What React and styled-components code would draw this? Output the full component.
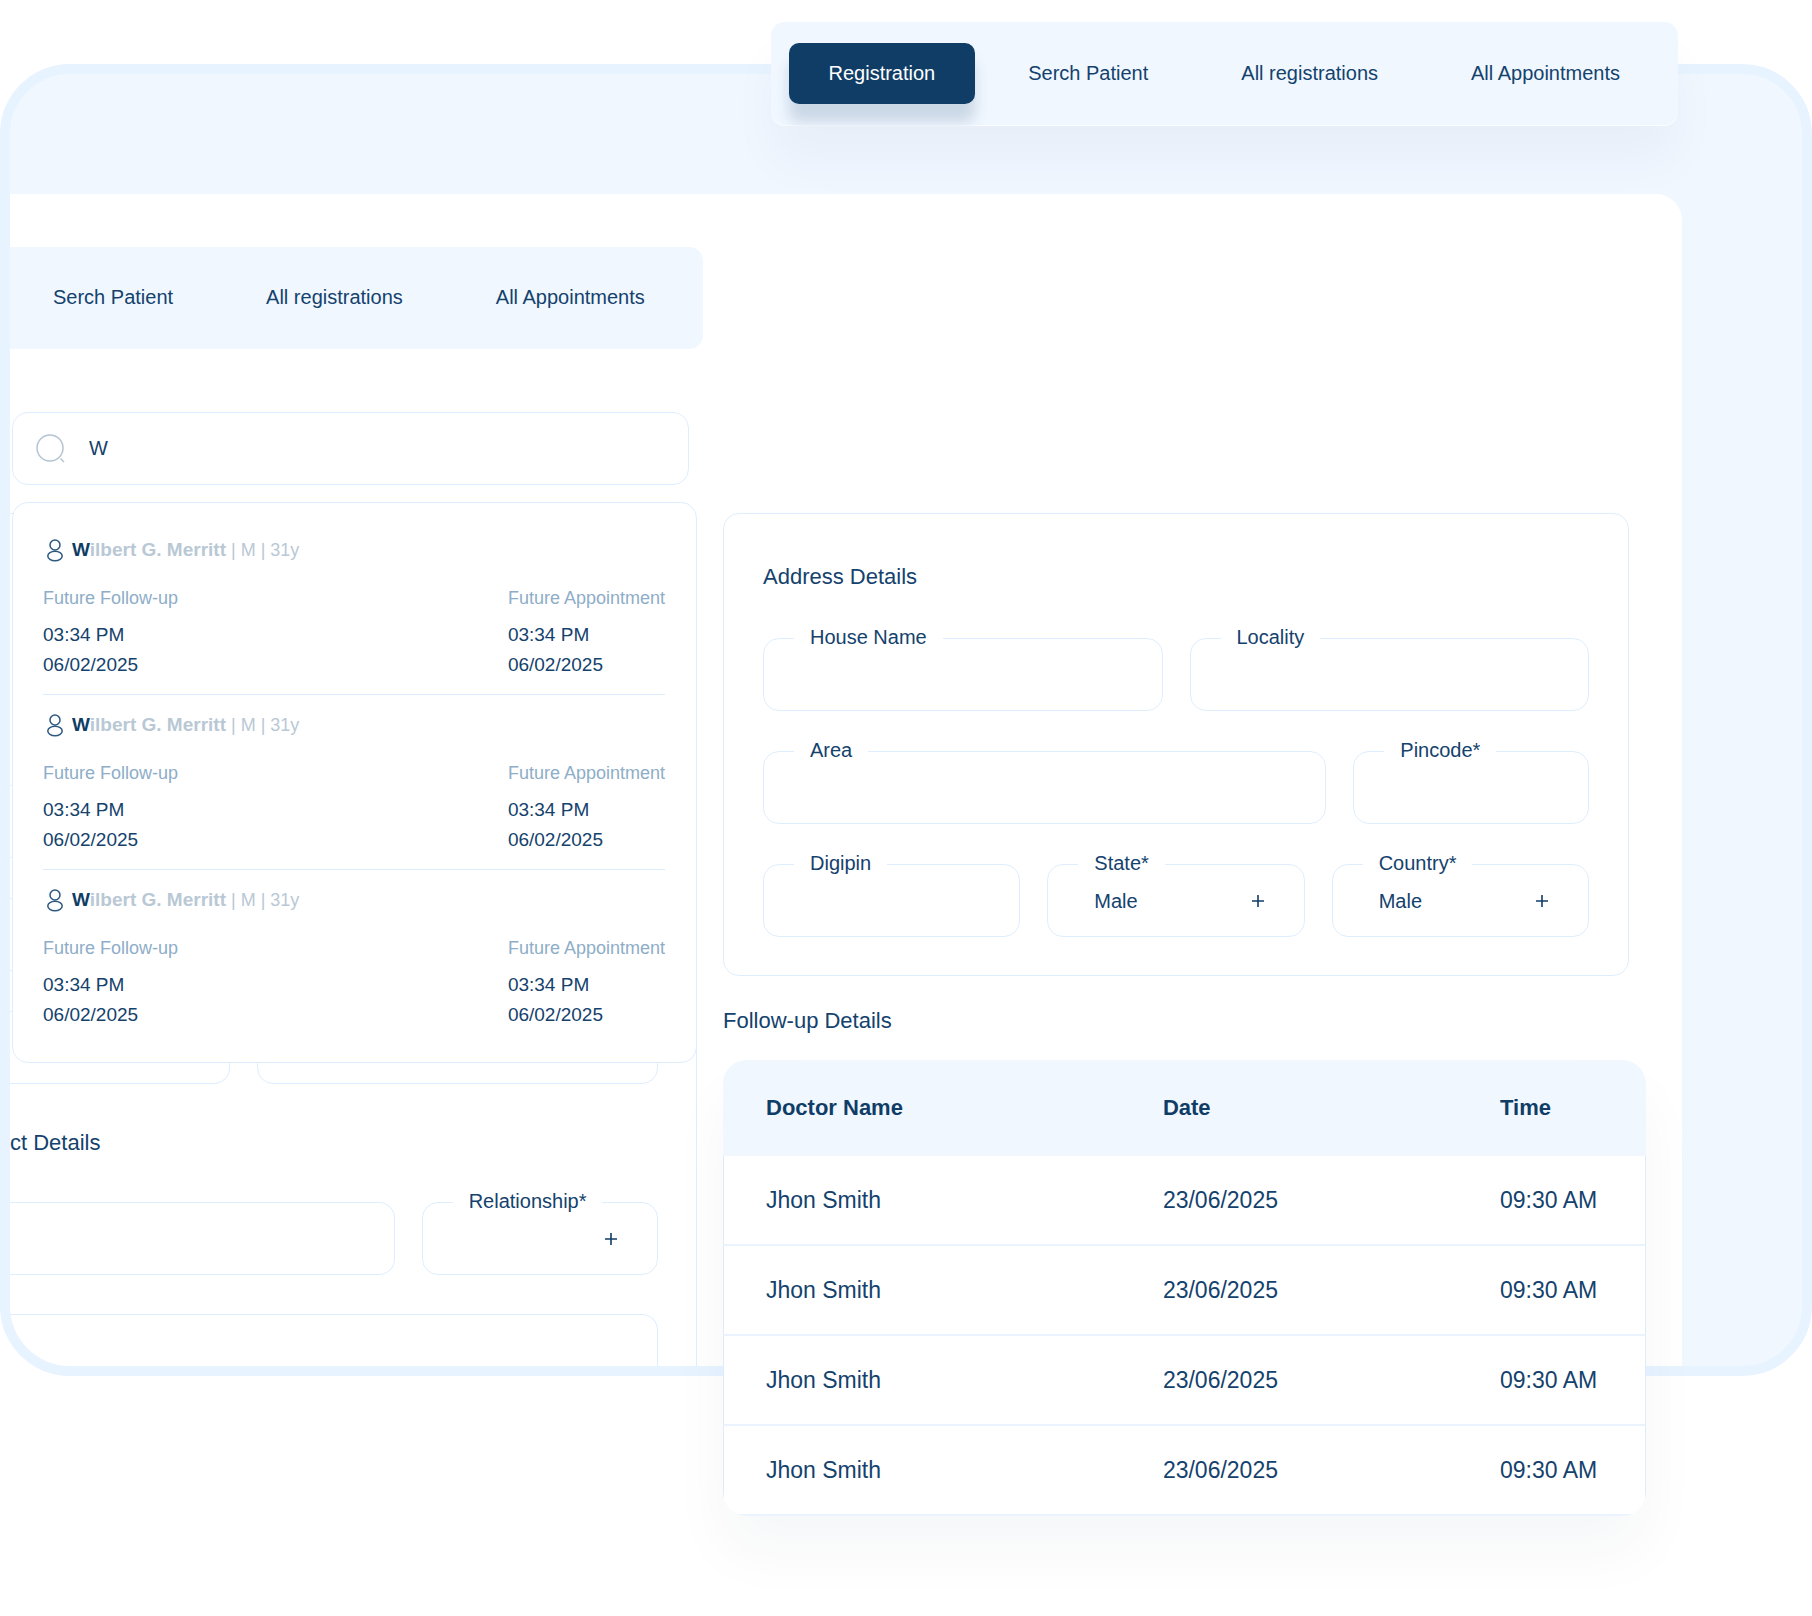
import React, { useState } from "react";
import styled, { createGlobalStyle } from "styled-components";

const GlobalStyle = createGlobalStyle`
  * {
    box-sizing: border-box;
  }

  body {
    margin: 0;
    background: #ffffff;
    color: #14426d;
    font-family: "Liberation Sans", Arial, Helvetica, sans-serif;
  }
`;

const Page = styled.main`
  position: relative;
  padding: 64px 0 240px;
`;

const Stage = styled.div`
  display: grid;
  grid-template-columns: minmax(0, 697fr) 26px minmax(0, 906fr) 183px;
`;

const Frame = styled.div`
  grid-column: 1 / -1;
  grid-row: 1;
  display: flex;
  padding: 120px 120px 0 0;
  border: 10px solid #e7f3ff;
  border-radius: 70px;
  background: #f0f7ff;
  overflow: hidden;
`;

const Sheet = styled.div`
  flex: 1;
  border-top-right-radius: 26px;
  background: #ffffff;
`;

const LeftPane = styled.section`
  grid-column: 1;
  grid-row: 1;
  display: flex;
  flex-direction: column;
  margin: 0 0 10px 10px;
  padding-top: 183px;
`;

const RightPane = styled.div`
  grid-column: 3;
  grid-row: 1;
  padding-top: 449px;
`;

const Tabs = styled.nav`
  display: flex;
  gap: 13px;
  align-self: flex-start;
  padding: 20px 18px 21px 3px;
  border-radius: 0 14px 14px 0;
  background: #f0f7ff;
`;

const FloatingTabs = styled(Tabs)`
  position: absolute;
  top: 22px;
  right: 134px;
  padding: 21px 18px 22px;
  border-radius: 14px;
  overflow: hidden;
  box-shadow: 0 36px 48px rgba(20, 40, 90, 0.035), inset 0 -1px 0 #fbfdff;
`;

const Tab = styled.button`
  height: 61px;
  padding: 0 40px;
  border: 0;
  border-radius: 10px;
  background: ${({ $active }) => ($active ? "#103d66" : "transparent")};
  box-shadow: ${({ $active }) =>
    $active ? "0 18px 14px rgba(16, 61, 102, 0.17)" : "none"};
  color: ${({ $active }) => ($active ? "#ffffff" : "#14426d")};
  font: inherit;
  font-size: 20px;
  white-space: nowrap;
  cursor: pointer;
`;

const SearchArea = styled.div`
  position: relative;
  margin: 63px 8px 0 2px;
`;

const SearchBox = styled.label`
  display: flex;
  align-items: center;
  gap: 24px;
  height: 73px;
  padding: 0 22px;
  border: 1px solid #dfeefe;
  border-radius: 16px;
  background: #ffffff;
`;

const SearchInput = styled.input`
  flex: 1;
  min-width: 0;
  padding: 0;
  border: 0;
  outline: none;
  background: transparent;
  color: #14426d;
  font: inherit;
  font-size: 20px;
`;

const Results = styled.ul`
  position: absolute;
  z-index: 2;
  top: calc(100% + 17px);
  left: 0;
  right: -8px;
  margin: 0;
  padding: 17px 31px 17px 30px;
  border: 1px solid #dfeefe;
  border-radius: 16px;
  background: #ffffff;
  list-style: none;
`;

const Result = styled.li`
  padding: 18px 0 14px;
  border-bottom: 1px solid #dcecfc;

  &:last-child {
    border-bottom-color: transparent;
  }
`;

const ResultName = styled.div`
  display: flex;
  align-items: center;
  gap: 5px;
  height: 24px;
  color: #b9c8d5;
  font-size: 18px;
  white-space: pre;
`;

const FullName = styled.b`
  font-size: 19px;
`;

const Match = styled.span`
  color: #103d66;
`;

const ResultColumns = styled.div`
  display: flex;
  justify-content: space-between;
  margin-top: 24px;
`;

const Visit = styled.div`
  font-size: 19px;
  line-height: 30px;
`;

const VisitLabel = styled.div`
  margin-bottom: 10px;
  color: #8eadc8;
  font-size: 18px;
  line-height: 24px;
`;

const FormPanel = styled.div`
  flex: 1;
  margin-top: 28px;
  padding: 271px 38px 0 0;
  border-top: 1px solid #dfeefe;
  border-right: 1px solid #dfeefe;
  border-top-right-radius: 16px;
`;

const Card = styled.section`
  padding: 49px 39px 38px;
  border: 1px solid #dfeefe;
  border-radius: 16px;
  background: #ffffff;
`;

const Heading = styled.h2`
  margin: 0;
  font-size: 22px;
  font-weight: 400;
  line-height: 28px;
`;

const CardHeading = styled(Heading)`
  margin-bottom: 47px;
`;

const ContactHeading = styled(Heading)`
  margin: 45px 0;
`;

const Row = styled.div`
  display: flex;
  gap: 27px;

  & + & {
    margin-top: 40px;
  }
`;

const FieldBox = styled.div`
  position: relative;
  flex: ${({ $grow }) => $grow || 1} 1 0;
  min-width: 0;
  height: 73px;
`;

const FieldLabel = styled.label`
  position: absolute;
  top: -13px;
  left: 31px;
  padding: 0 16px;
  background: #ffffff;
  font-size: 20px;
  line-height: 24px;
  white-space: nowrap;
`;

const FieldInput = styled.input`
  display: block;
  width: 100%;
  height: 100%;
  padding: 0 46px;
  border: 1px solid #dfeefe;
  border-left-width: ${({ $cut }) => ($cut ? "0" : "1px")};
  border-radius: ${({ $cut }) => ($cut ? "0 16px 16px 0" : "16px")};
  outline: none;
  background: transparent;
  color: #14426d;
  font: inherit;
  font-size: 20px;
`;

const FieldSelect = styled(FieldInput)`
  appearance: none;
`;

const LastInput = styled(FieldInput)`
  height: 52px;
  margin-top: 39px;
  border-bottom: 0;
  border-radius: 0 16px 0 0;
`;

const PlusMark = styled.svg`
  position: absolute;
  top: 30px;
  right: 40px;
  pointer-events: none;
`;

const FollowUp = styled.section`
  margin: 31px -17px -141px 0;
`;

const FollowUpHeading = styled(Heading)`
  margin-bottom: 25px;
`;

const TableCard = styled.div`
  border-radius: 24px;
  background: #ffffff;
  overflow: hidden;
  box-shadow: 0 36px 60px rgba(20, 40, 80, 0.04);
`;

const Table = styled.table`
  width: 100%;
  border-collapse: separate;
  border-spacing: 0;
  table-layout: fixed;
`;

const HeadCell = styled.th`
  width: ${({ $width }) => $width};
  height: 96px;
  padding: 0 0 0 43px;
  background: #f0f7ff;
  color: #103d66;
  font-size: 22px;
  text-align: left;
`;

const Cell = styled.td`
  height: 90px;
  padding: 0 0 0 43px;
  border-bottom: 2px solid #ebf4fe;
  font-size: 23px;
  white-space: nowrap;

  &:first-child {
    padding-left: 42px;
    border-left: 1px solid #dcecfc;
  }

  &:last-child {
    border-right: 1px solid #dcecfc;
  }
`;

const SearchIcon = () => (
  <svg width="30" height="30" viewBox="0 0 30 30" fill="none" stroke="#b5c4d3" strokeWidth="1.5" aria-hidden="true">
    <circle cx="15" cy="14" r="13" />
    <path d="M25.5 24.5l3.5 3.5" />
  </svg>
);

const UserIcon = () => (
  <svg width="24" height="24" viewBox="0 0 24 24" fill="none" stroke="#2d587f" strokeWidth="1.5" aria-hidden="true">
    <circle cx="12" cy="7" r="5" />
    <ellipse cx="12" cy="18" rx="7.2" ry="4.7" />
  </svg>
);

const Field = ({ id, label, grow }) => (
  <FieldBox $grow={grow}>
    <FieldInput id={id} type="text" />
    <FieldLabel htmlFor={id}>{label}</FieldLabel>
  </FieldBox>
);

const SelectField = ({ id, label, value, grow }) => (
  <FieldBox $grow={grow}>
    <FieldSelect as="select" id={id} defaultValue={value}>
      <option value={value}>{value}</option>
    </FieldSelect>
    <FieldLabel htmlFor={id}>{label}</FieldLabel>
    <PlusMark width="14" height="14" viewBox="0 0 14 14" stroke="#103d66" strokeWidth="1.6" aria-hidden="true">
      <path d="M7 1v12M1 7h12" />
    </PlusMark>
  </FieldBox>
);

const tabs = ["Registration", "Serch Patient", "All registrations", "All Appointments"];

const patients = [1, 2, 3].map((id) => ({
  id,
  match: "W",
  rest: "ilbert G. Merritt",
  info: " | M | 31y",
  time: "03:34 PM",
  date: "06/02/2025",
}));

const followUps = [1, 2, 3, 4].map((id) => ({
  id,
  doctor: "Jhon Smith",
  date: "23/06/2025",
  time: "09:30 AM",
}));

const App = () => {
  const [activeTab, setActiveTab] = useState("Registration");
  const [query, setQuery] = useState("W");

  return (
    <Page>
      <GlobalStyle />
      <Stage>
        <Frame>
          <Sheet />
        </Frame>

        <LeftPane>
          <Tabs>
            {tabs.slice(1).map((tab) => (
              <Tab key={tab} type="button">{tab}</Tab>
            ))}
          </Tabs>

          <SearchArea>
            <SearchBox>
              <SearchIcon />
              <SearchInput
                type="text"
                aria-label="Search patient"
                value={query}
                onChange={(e) => setQuery(e.target.value)}
              />
            </SearchBox>
            <Results>
              {patients.map((patient) => (
                <Result key={patient.id}>
                  <ResultName>
                    <UserIcon />
                    <span>
                      <FullName>
                        <Match>{patient.match}</Match>
                        {patient.rest}
                      </FullName>
                      {patient.info}
                    </span>
                  </ResultName>
                  <ResultColumns>
                    {["Future Follow-up", "Future Appointment"].map((label) => (
                      <Visit key={label}>
                        <VisitLabel>{label}</VisitLabel>
                        <div>{patient.time}</div>
                        <div>{patient.date}</div>
                      </Visit>
                    ))}
                  </ResultColumns>
                </Result>
              ))}
            </Results>
          </SearchArea>

          <FormPanel>
            {[1, 2, 3].map((row) => (
              <Row key={row}>
                <FieldBox $grow={220}>
                  <FieldInput $cut type="text" aria-label={`Patient detail ${row}a`} />
                </FieldBox>
                <FieldBox $grow={400}>
                  <FieldInput type="text" aria-label={`Patient detail ${row}b`} />
                </FieldBox>
              </Row>
            ))}
            <ContactHeading>ct Details</ContactHeading>
            <Row>
              <FieldBox $grow={384}>
                <FieldInput $cut type="text" aria-label="Contact name" />
              </FieldBox>
              <SelectField id="relationship" label="Relationship*" value="" grow={236} />
            </Row>
            <LastInput $cut type="text" aria-label="Contact address" />
          </FormPanel>
        </LeftPane>

        <RightPane>
          <Card>
            <CardHeading>Address Details</CardHeading>
            <Row>
              <Field id="house" label="House Name" />
              <Field id="locality" label="Locality" />
            </Row>
            <Row>
              <Field id="area" label="Area" grow={564} />
              <Field id="pincode" label="Pincode*" grow={236} />
            </Row>
            <Row>
              <Field id="digipin" label="Digipin" />
              <SelectField id="state" label="State*" value="Male" />
              <SelectField id="country" label="Country*" value="Male" />
            </Row>
          </Card>

          <FollowUp>
            <FollowUpHeading>Follow-up Details</FollowUpHeading>
            <TableCard>
              <Table>
                <thead>
                  <tr>
                    <HeadCell $width="43%">Doctor Name</HeadCell>
                    <HeadCell $width="auto">Date</HeadCell>
                    <HeadCell $width="189px">Time</HeadCell>
                  </tr>
                </thead>
                <tbody>
                  {followUps.map((item) => (
                    <tr key={item.id}>
                      <Cell>{item.doctor}</Cell>
                      <Cell>{item.date}</Cell>
                      <Cell>{item.time}</Cell>
                    </tr>
                  ))}
                </tbody>
              </Table>
            </TableCard>
          </FollowUp>
        </RightPane>
      </Stage>

      <FloatingTabs>
        {tabs.map((tab) => (
          <Tab
            key={tab}
            type="button"
            $active={activeTab === tab}
            onClick={() => setActiveTab(tab)}
          >
            {tab}
          </Tab>
        ))}
      </FloatingTabs>
    </Page>
  );
};

export default App;
